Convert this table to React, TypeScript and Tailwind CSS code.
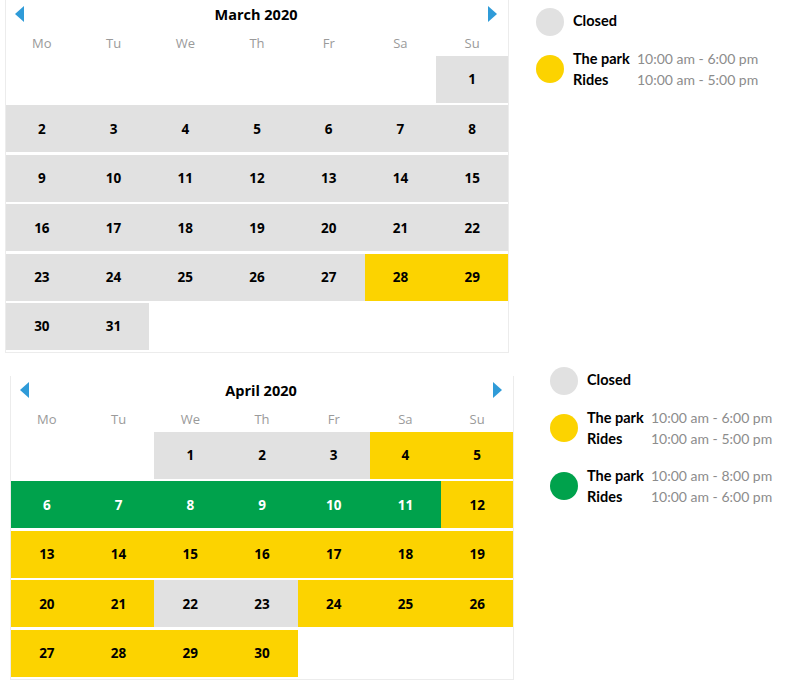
import React from "react";

type DayState = "closed" | "yellow" | "green";

const dayNames = ["Mo", "Tu", "We", "Th", "Fr", "Sa", "Su"];

const stateClass: Record<DayState, string> = {
  closed: "bg-[#e1e1e1] text-black",
  yellow: "bg-[#fcd300] text-black",
  green: "bg-[#00a24c] text-white",
};

function Arrow({ dir }: { dir: "left" | "right" }) {
  return (
    <svg width="9" height="16" viewBox="0 0 9 16" className="block">
      {dir === "left" ? (
        <polygon points="9,0 9,16 0,8" fill="#2f9bd8" />
      ) : (
        <polygon points="0,0 0,16 9,8" fill="#2f9bd8" />
      )}
    </svg>
  );
}

function Month({
  title,
  offset,
  days,
  stateOf,
}: {
  title: string;
  offset: number;
  days: number;
  stateOf: (d: number) => DayState;
}) {
  const cells: (number | null)[] = [];
  for (let i = 0; i < offset; i++) cells.push(null);
  for (let d = 1; d <= days; d++) cells.push(d);
  while (cells.length % 7 !== 0) cells.push(null);

  return (
    <div className="w-[504px] border-x border-b border-[#ececec] pb-[2px] font-['Open_Sans',sans-serif]">
      <div className="flex h-[28px] items-center justify-between pl-[9px] pr-[11px]">
        <Arrow dir="left" />
        <span className="mt-[2px] text-[14.5px] font-bold text-black">{title}</span>
        <Arrow dir="right" />
      </div>
      <div className="grid h-[28px] grid-cols-7 items-center pt-[3px]">
        {dayNames.map((n) => (
          <div key={n} className="text-center text-[13px] font-medium text-[#9a9a9a]">
            {n}
          </div>
        ))}
      </div>
      <div className="grid grid-cols-7 gap-y-[2.4px]">
        {cells.map((d, i) =>
          d === null ? (
            <div key={i} className="h-[47px]" />
          ) : (
            <div
              key={i}
              className={`flex h-[47px] items-center justify-center text-[13.5px] font-bold ${stateClass[stateOf(d)]}`}
            >
              {d}
            </div>
          )
        )}
      </div>
    </div>
  );
}

function Dot({ color }: { color: string }) {
  return <div className={`h-[28px] w-[28px] shrink-0 rounded-full ${color}`} />;
}

function Hours({ park, rides }: { park: string; rides: string }) {
  return (
    <div className="grid grid-cols-[64px_auto] gap-y-[2px] text-[14px] leading-[19px]">
      <span className="text-[14.5px] font-bold text-black">The park</span>
      <span className="text-[#8c8c8c]">{park}</span>
      <span className="text-[14.5px] font-bold text-black">Rides</span>
      <span className="text-[#8c8c8c]">{rides}</span>
    </div>
  );
}

function Legend({ green }: { green?: boolean }) {
  return (
    <div className="flex flex-col gap-[13px] font-['Lato',sans-serif]">
      <div className="flex items-center gap-[9px]">
        <Dot color="bg-[#e1e1e1]" />
        <span className="-mt-[2px] text-[14.5px] font-bold text-black">Closed</span>
      </div>
      <div className="flex items-center gap-[9px]">
        <Dot color="bg-[#fcd300]" />
        <Hours park="10:00 am - 6:00 pm" rides="10:00 am - 5:00 pm" />
      </div>
      {green && (
        <div className="mt-[5px] flex items-center gap-[9px]">
          <Dot color="bg-[#00a24c]" />
          <Hours park="10:00 am - 8:00 pm" rides="10:00 am - 6:00 pm" />
        </div>
      )}
    </div>
  );
}

export default function App() {
  return (
    <div className="min-h-[696px] w-[794px] bg-white">
      <div className="flex items-start pl-[5px]">
        <Month
          title="March 2020"
          offset={6}
          days={31}
          stateOf={(d) => (d === 28 || d === 29 ? "yellow" : "closed")}
        />
        <div className="ml-[27px] mt-[8px]">
          <Legend />
        </div>
      </div>
      <div className="mt-[23px] flex items-start pl-[10px]">
        <Month
          title="April 2020"
          offset={2}
          days={30}
          stateOf={(d) =>
            d <= 3 || d === 22 || d === 23
              ? "closed"
              : d >= 6 && d <= 11
              ? "green"
              : "yellow"
          }
        />
        <div className="ml-[36px] mt-[-9px]">
          <Legend green />
        </div>
      </div>
    </div>
  );
}
